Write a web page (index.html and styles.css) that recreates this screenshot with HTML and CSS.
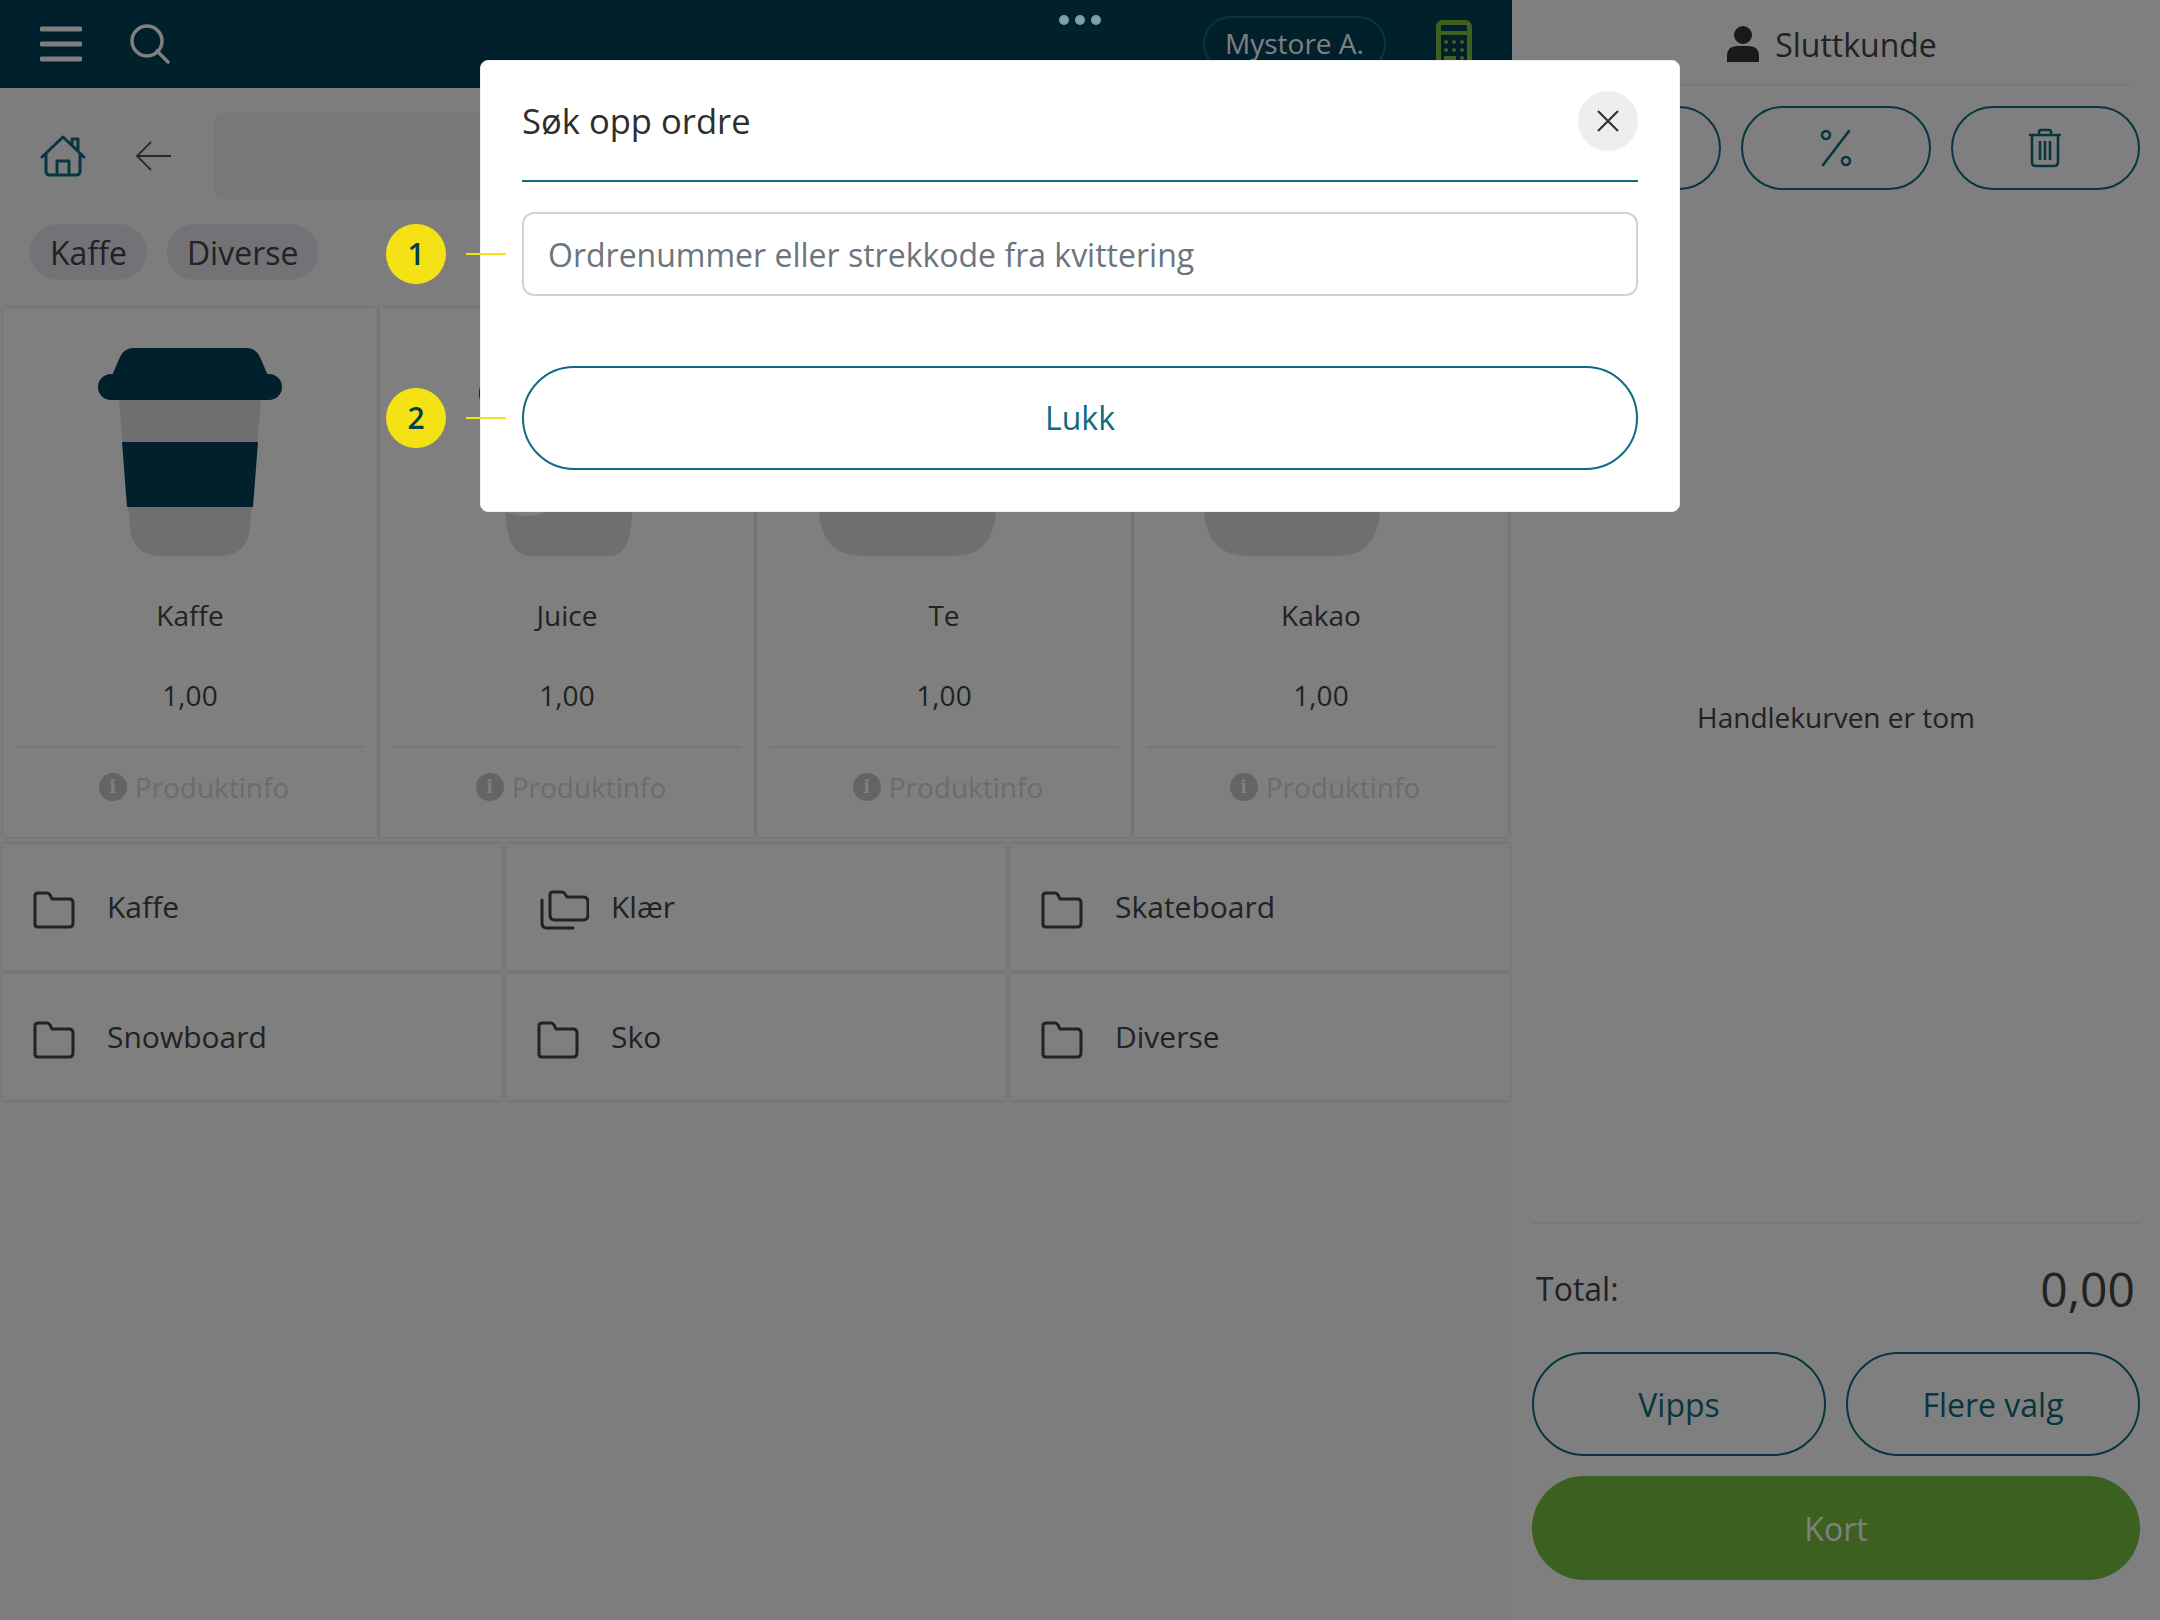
FILE: index.html
```html
<!DOCTYPE html>
<html lang="en">
<head>
  <meta charset="UTF-8">
  <title>Søk opp ordre</title>
  <link rel="stylesheet" href="styles.css">
</head>
<body>
  <div class="app">
    <div class="left">
      <div class="topbar">
        <svg class="menu-icon" width="42" height="36" viewBox="0 0 42 36"><path d="M2 3H40M2 18H40M2 33H40" stroke="#fff" stroke-width="5" stroke-linecap="round"/></svg>
        <svg class="search-icon" width="40" height="40" viewBox="0 0 40 40"><circle cx="17" cy="17" r="15" fill="none" stroke="#fff" stroke-width="3.5"/><path d="M27 27L38 38" stroke="#fff" stroke-width="3.5" stroke-linecap="round"/></svg>
        <div class="store-pill">Mystore A.</div>
        <svg class="calc-icon" width="36" height="52" viewBox="0 0 36 52"><rect x="2.5" y="2.5" width="31" height="47" rx="4" fill="none" stroke="#80c040" stroke-width="5"/><path d="M2 13H34" stroke="#80c040" stroke-width="4"/><g fill="#80c040"><circle cx="10" cy="22" r="2"/><circle cx="18" cy="22" r="2"/><circle cx="26" cy="22" r="2"/><circle cx="10" cy="30" r="2"/><circle cx="18" cy="30" r="2"/><circle cx="26" cy="30" r="2"/><rect x="8" y="36" width="12" height="4"/><circle cx="26" cy="38" r="2"/></g></svg>
      </div>

      <div class="toolbar">
        <svg class="home-icon" width="46" height="42" viewBox="0 0 46 42"><path d="M2 22L23 2L44 22M32 9V4H38V15M6 18V36Q6 40 10 40H36Q40 40 40 36V18M17 40V26H29V40" fill="none" stroke="#0f6b80" stroke-width="3" stroke-linecap="round" stroke-linejoin="round"/></svg>
        <svg class="back-icon" width="36" height="30" viewBox="0 0 36 30"><path d="M35 15H1M15 1L1 15L15 29" fill="none" stroke="#555" stroke-width="1.8"/></svg>
        <div class="search-bar"></div>
      </div>

      <div class="chips">
        <span class="chip">Kaffe</span>
        <span class="chip">Diverse</span>
      </div>

      <div class="products">
        <div class="product">
          <svg class="cup" width="184" height="208" viewBox="0 0 184 208">
            <path d="M21 52H163L152 180Q149 208 121 208H63Q35 208 32 180Z" fill="#dedede"/>
            <path d="M24 94H160L155 159H29Z" fill="#004058"/>
            <path d="M13 30L22 9Q26 0 36 0H148Q158 0 162 9L171 30Z" fill="#004058"/>
            <rect x="0" y="26" width="184" height="26" rx="13" fill="#004058"/>
          </svg>
          <div class="product-name">Kaffe</div>
          <div class="product-price">1,00</div>
          <div class="product-info"><span class="info-dot">i</span>Produktinfo</div>
        </div>
        <div class="product">
          <svg class="cup" width="184" height="208" viewBox="0 0 184 208">
            <path d="M31 100V170Q33 208 56 208H134Q155 208 157 170V100Z" fill="#dedede"/>
            <path d="M31 164Q50 172 72 164Z" fill="#fff"/>
            <path d="M5 39Q3 45 5 52H8V39Z" fill="#004058"/>
          </svg>
          <div class="product-name">Juice</div>
          <div class="product-price">1,00</div>
          <div class="product-info"><span class="info-dot">i</span>Produktinfo</div>
        </div>
        <div class="product">
          <svg class="cup" width="184" height="208" viewBox="0 0 184 208">
            <path d="M-33 100V164Q-30 208 10 208H102Q141 208 144 164V100Z" fill="#dedede"/>
          </svg>
          <div class="product-name">Te</div>
          <div class="product-price">1,00</div>
          <div class="product-info"><span class="info-dot">i</span>Produktinfo</div>
        </div>
        <div class="product">
          <svg class="cup" width="184" height="208" viewBox="0 0 184 208">
            <path d="M-25 100V164Q-22 208 19 208H108Q148 208 151 164V100Z" fill="#dedede"/>
          </svg>
          <div class="product-name">Kakao</div>
          <div class="product-price">1,00</div>
          <div class="product-info"><span class="info-dot">i</span>Produktinfo</div>
        </div>
      </div>

      <div class="categories">
        <div class="category">
          <span class="cat-icon"><svg width="42" height="38" viewBox="0 0 42 38"><path d="M2 5Q2 2 5 2H14Q16 2 17 4L19 8H36Q40 8 40 12V32Q40 36 36 36H5Q2 36 2 33Z" fill="none" stroke="#444" stroke-width="3" stroke-linejoin="round"/></svg></span>Kaffe
        </div>
        <div class="category">
          <span class="cat-icon"><svg width="52" height="40" viewBox="-3 0 52 40"><path d="M10 5Q10 2 13 2H22Q24 2 25 4L27 7H43Q48 7 48 12V25Q48 30 43 30H15Q10 30 10 25Z" fill="none" stroke="#444" stroke-width="3" stroke-linejoin="round"/><path d="M2 10V33Q2 38 7 38H33" fill="none" stroke="#444" stroke-width="3" stroke-linecap="round"/></svg></span>Klær
        </div>
        <div class="category">
          <span class="cat-icon"><svg width="42" height="38" viewBox="0 0 42 38"><path d="M2 5Q2 2 5 2H14Q16 2 17 4L19 8H36Q40 8 40 12V32Q40 36 36 36H5Q2 36 2 33Z" fill="none" stroke="#444" stroke-width="3" stroke-linejoin="round"/></svg></span>Skateboard
        </div>
        <div class="category">
          <span class="cat-icon"><svg width="42" height="38" viewBox="0 0 42 38"><path d="M2 5Q2 2 5 2H14Q16 2 17 4L19 8H36Q40 8 40 12V32Q40 36 36 36H5Q2 36 2 33Z" fill="none" stroke="#444" stroke-width="3" stroke-linejoin="round"/></svg></span>Snowboard
        </div>
        <div class="category">
          <span class="cat-icon"><svg width="42" height="38" viewBox="0 0 42 38"><path d="M2 5Q2 2 5 2H14Q16 2 17 4L19 8H36Q40 8 40 12V32Q40 36 36 36H5Q2 36 2 33Z" fill="none" stroke="#444" stroke-width="3" stroke-linejoin="round"/></svg></span>Sko
        </div>
        <div class="category">
          <span class="cat-icon"><svg width="42" height="38" viewBox="0 0 42 38"><path d="M2 5Q2 2 5 2H14Q16 2 17 4L19 8H36Q40 8 40 12V32Q40 36 36 36H5Q2 36 2 33Z" fill="none" stroke="#444" stroke-width="3" stroke-linejoin="round"/></svg></span>Diverse
        </div>
      </div>
    </div>

    <div class="right">
      <div class="customer">
        <svg width="32" height="36" viewBox="0 0 32 36"><circle cx="16" cy="9" r="9" fill="#333"/><path d="M0 36V30Q0 20 10 20H22Q32 20 32 30V36Z" fill="#333"/></svg>
        Sluttkunde
      </div>
      <div class="cart-actions">
        <div class="outline-btn"></div>
        <div class="outline-btn">
          <svg width="32" height="38" viewBox="0 0 32 38"><circle cx="6" cy="6" r="4" fill="none" stroke="#0f6b80" stroke-width="2.6"/><circle cx="26" cy="32" r="4" fill="none" stroke="#0f6b80" stroke-width="2.6"/><path d="M29 2L3 36" stroke="#0f6b80" stroke-width="2.6" stroke-linecap="round"/></svg>
        </div>
        <div class="outline-btn">
          <svg width="34" height="40" viewBox="0 0 34 40"><path d="M1 7H33M11 7V4Q11 2 13 2H21Q23 2 23 4V7M4 7V34Q4 38 8 38H26Q30 38 30 34V7M12 13V32M17 13V32M22 13V32" fill="none" stroke="#0f6b80" stroke-width="2.6"/></svg>
        </div>
      </div>
      <div class="cart-empty">Handlekurven er tom</div>
      <div class="total-row">
        <span>Total:</span>
        <span class="total-sum">0,00</span>
      </div>
      <div class="pay-row">
        <div class="outline-btn pay-btn">Vipps</div>
        <div class="outline-btn pay-btn">Flere valg</div>
      </div>
      <div class="card-btn">Kort</div>
    </div>
  </div>

  <div class="overlay"></div>
  <div class="dots"><i></i><i></i><i></i></div>

  <div class="modal">
    <div class="modal-head">
      <div class="modal-title">Søk opp ordre</div>
      <div class="modal-close"><svg width="22" height="22" viewBox="0 0 22 22"><path d="M1 1L21 21M21 1L1 21" stroke="#333" stroke-width="2.2"/></svg></div>
    </div>
    <input class="modal-input" type="text" placeholder="Ordrenummer eller strekkode fra kvittering">
    <div class="modal-btn">Lukk</div>
  </div>

  <div class="marker marker-one"><span class="marker-num">1</span><span class="marker-line"></span></div>
  <div class="marker marker-two"><span class="marker-num">2</span><span class="marker-line"></span></div>
</body>
</html>
```
FILE: styles.css
```css
* {
  box-sizing: border-box;
}

html, body {
  margin: 0;
  height: 1620px;
  overflow: hidden;
}

body {
  position: relative;
  font-family: "Open Sans", "Noto Sans", sans-serif;
  color: #444;
  background: #fff;
}

.app {
  display: grid;
  grid-template-columns: 1512px 648px;
  height: 1620px;
}

/* left side */
.left {
  background: #fbfbfb;
  display: flex;
  flex-direction: column;
}

.topbar {
  height: 88px;
  background: #004058;
  display: flex;
  align-items: center;
  padding: 0 40px;
}

.search-icon {
  margin-left: 48px;
}

.store-pill {
  margin-left: auto;
  width: 183px;
  height: 56px;
  padding-bottom: 2px;
  border: 2px solid #0f6b80;
  border-radius: 28px;
  color: #fff;
  font-size: 28px;
  display: flex;
  align-items: center;
  justify-content: center;
}

.calc-icon {
  margin-left: 50px;
  margin-top: 4px;
}

.toolbar {
  height: 136px;
  display: flex;
  align-items: center;
  padding: 0 20px 0 40px;
}

.back-icon {
  margin-left: 50px;
}

.search-bar {
  flex: 1;
  height: 88px;
  margin-left: 42px;
  background: #f0f0f0;
  border-radius: 10px;
}

.chips {
  display: flex;
  gap: 20px;
  padding-left: 30px;
  height: 80px;
}

.chip {
  height: 56px;
  padding: 0 20px;
  border-radius: 28px;
  background: #e6e6ee;
  font-size: 32px;
  display: flex;
  align-items: center;
}

.products {
  display: grid;
  grid-template-columns: repeat(4, 374px);
  gap: 3px;
  padding: 4px 0 0 3px;
}

.product {
  height: 529px;
  background: #fff;
  box-shadow: 0 0 4px rgba(0, 0, 0, .16);
  padding-top: 40px;
  display: flex;
  flex-direction: column;
  align-items: center;
}

.cup {
  overflow: visible;
}

.product-name, .product-price {
  font-size: 28px;
  line-height: 40px;
  margin-top: 40px;
}

.product-name {
  margin-top: 39px;
}

.product-info {
  align-self: stretch;
  margin: 31px 13px 0;
  padding-left: 8px;
  height: 79px;
  border-top: 2px solid #ececec;
  color: #d8d8d8;
  font-size: 28px;
  display: flex;
  align-items: center;
  justify-content: center;
  gap: 8px;
}

.info-dot {
  width: 28px;
  height: 28px;
  border-radius: 50%;
  background: #c8c8c8;
  color: #fff;
  font-family: "DejaVu Serif", serif;
  font-weight: bold;
  font-size: 18px;
  display: flex;
  align-items: center;
  justify-content: center;
}

.categories {
  display: grid;
  grid-template-columns: repeat(3, 500px);
  grid-auto-rows: 126px;
  gap: 4px;
  padding: 7px 0 0 2px;
}

.category {
  background: #fff;
  box-shadow: 0 0 4px rgba(0, 0, 0, .16);
  padding: 0 0 2px 31px;
  font-size: 30px;
  display: flex;
  align-items: center;
}

.cat-icon {
  width: 74px;
  display: flex;
  margin-top: 8px;
}

/* right side */
.right {
  background: #fff;
  padding: 0 20px;
  display: flex;
  flex-direction: column;
}

.customer {
  height: 86px;
  padding-top: 4px;
  border-bottom: 2px solid #f0f0f0;
  font-size: 32px;
  display: flex;
  align-items: center;
  justify-content: center;
  gap: 16px;
  margin-right: 8px;
}

.cart-actions {
  margin-top: 20px;
  display: grid;
  grid-template-columns: repeat(3, 1fr);
  gap: 20px;
}

.outline-btn {
  height: 84px;
  border: 2px solid #0f6b80;
  border-radius: 42px;
  color: #0f6b80;
  display: flex;
  align-items: center;
  justify-content: center;
}

.cart-empty {
  flex: 1;
  padding-top: 22px;
  border-bottom: 2px solid #f0f0f0;
  font-size: 28px;
  display: flex;
  align-items: center;
  justify-content: center;
}

.total-row {
  height: 128px;
  font-size: 32px;
  padding: 0 5px 0 4px;
  display: flex;
  align-items: center;
  justify-content: space-between;
}

.total-sum {
  font-size: 48px;
}

.pay-row {
  display: grid;
  grid-template-columns: repeat(2, 1fr);
  gap: 20px;
}

.pay-btn {
  height: 104px;
  border-radius: 52px;
  font-size: 32px;
}

.card-btn {
  height: 104px;
  margin: 20px 0 40px;
  border-radius: 52px;
  background: #78c040;
  color: #fff;
  font-size: 32px;
  display: flex;
  align-items: center;
  justify-content: center;
}

/* dimmed layer and what sits on top of it */
.overlay {
  position: absolute;
  inset: 0;
  background: rgba(0, 0, 0, .5);
}

.dots {
  position: absolute;
  left: 1059px;
  top: 15px;
  display: flex;
  gap: 6px;
}

.dots i {
  width: 10px;
  height: 10px;
  border-radius: 50%;
  background: #7ea0ab;
}

.marker {
  position: absolute;
  left: 386px;
  display: flex;
  align-items: center;
  gap: 20px;
}

.marker-one {
  top: 224px;
}

.marker-two {
  top: 388px;
}

.marker-num {
  width: 60px;
  height: 60px;
  padding-bottom: 2px;
  border-radius: 50%;
  background: #f4e214;
  color: #00404f;
  font-size: 30px;
  font-weight: 600;
  display: flex;
  align-items: center;
  justify-content: center;
}

.marker-line {
  width: 40px;
  height: 2px;
  background: #f4e214;
}

.modal {
  position: absolute;
  left: 480px;
  top: 60px;
  width: 1200px;
  height: 452px;
  background: #fff;
  border: 1px solid #eef1f3;
  border-radius: 8px;
  padding: 0 41px;
}

.modal-head {
  height: 121px;
  border-bottom: 2px solid #0f6b80;
  display: flex;
  align-items: center;
  justify-content: space-between;
}

.modal-title {
  color: #2e2e2e;
  font-size: 34.6px;
}

.modal-close {
  width: 60px;
  height: 60px;
  border-radius: 50%;
  background: #eee;
  display: flex;
  align-items: center;
  justify-content: center;
}

.modal-input {
  display: block;
  width: 100%;
  height: 84px;
  margin-top: 30px;
  padding: 0 24px;
  border: 2px solid #ced4da;
  border-radius: 12px;
  font-family: inherit;
  font-size: 32px;
  outline: none;
}

.modal-input::placeholder {
  color: #6c757d;
  opacity: 1;
}

.modal-btn {
  height: 104px;
  margin-top: 70px;
  padding-bottom: 1px;
  border: 2px solid #0f6b80;
  border-radius: 52px;
  color: #0f6b80;
  font-size: 32px;
  display: flex;
  align-items: center;
  justify-content: center;
}
```
